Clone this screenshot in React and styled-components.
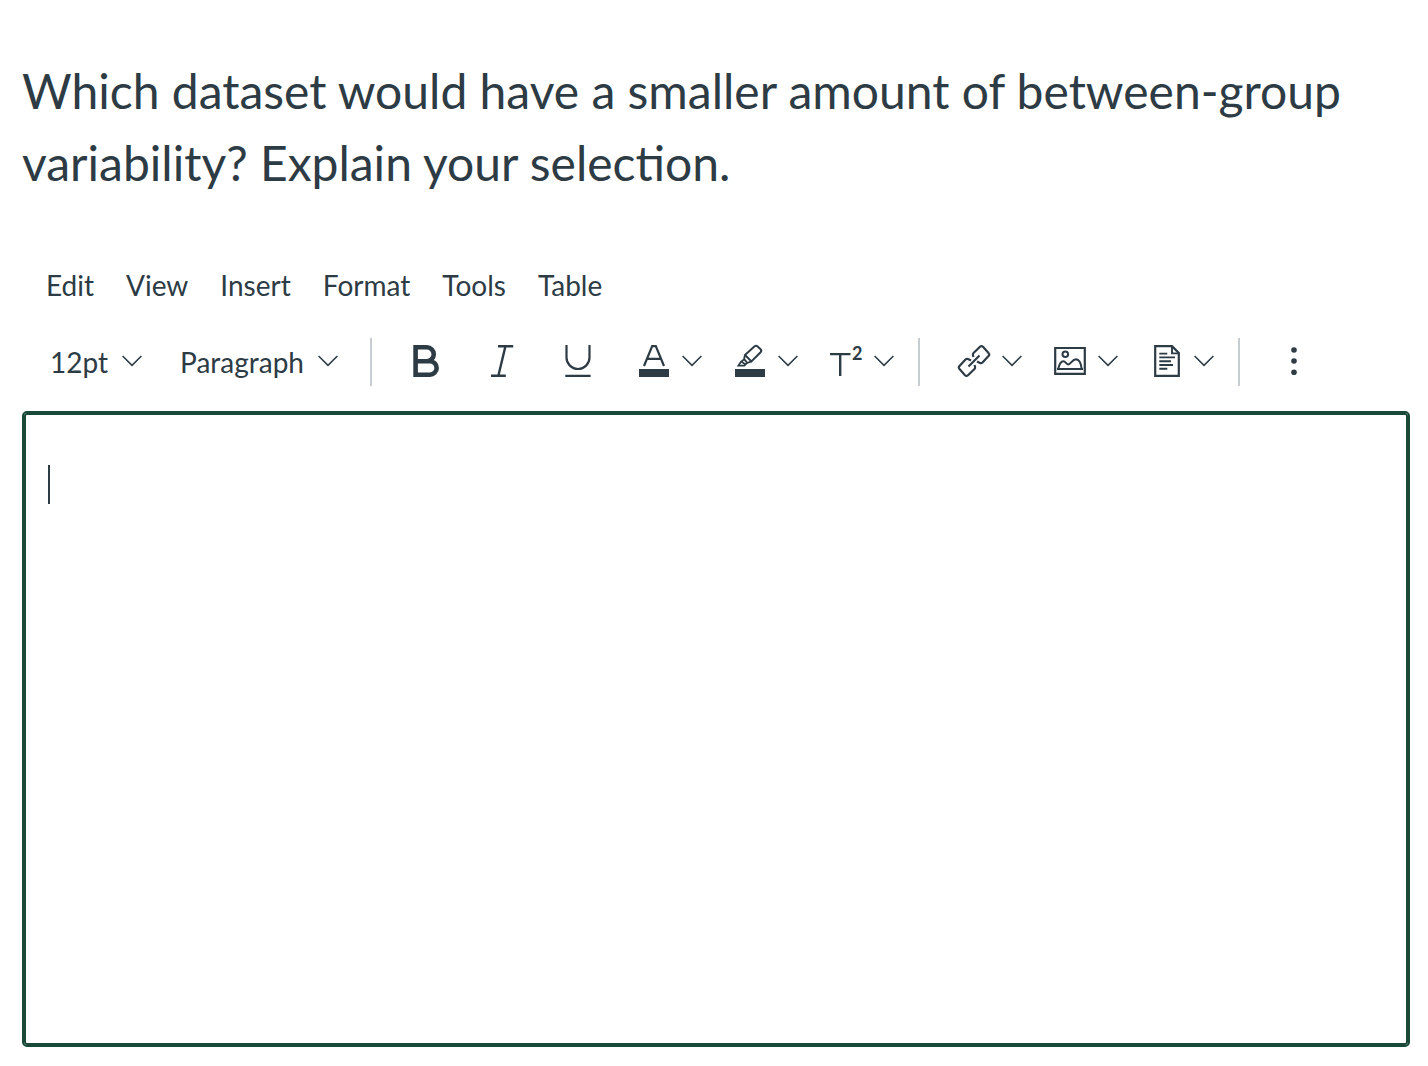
import React, { useState } from "react";
import styled, { createGlobalStyle } from "styled-components";

const GlobalStyle = createGlobalStyle`
    *, *::before, *::after {
        box-sizing: border-box;
    }

    body {
        margin: 0;
        background-color: #ffffff;
        color: #2d3b45;
        font-family: Lato, "Liberation Sans", sans-serif;
    }

    button, select, textarea {
        margin: 0;
        padding: 0;
        border: none;
        background: none;
        color: inherit;
        font: inherit;
    }
`;

const Page = styled.main`
    padding: 55px 18px 18px 22px;
`;

const Question = styled.h1`
    margin: 0;
    font-size: 48px;
    line-height: 72px;
    font-weight: 400;
`;

const MenuBar = styled.nav`
    display: flex;
    flex-wrap: wrap;
    gap: 32px;
    margin-top: 66px;
    padding-left: 24px;
`;

const MenuButton = styled.button`
    font-size: 28px;
    line-height: 40px;
    cursor: pointer;
`;

const Toolbar = styled.div`
    display: flex;
    flex-wrap: wrap;
    align-items: center;
    margin-top: 33px;
    padding-left: 28px;
`;

const Group = styled.div`
    display: flex;
    align-items: center;
    gap: ${({ $gap }) => $gap}px;
`;

const Divider = styled.span`
    width: 2px;
    height: 48px;
    margin: 0 38px 0 ${({ $before }) => $before || 24}px;
    background-color: #c7cdd1;
`;

const ToolButton = styled.button`
    display: flex;
    align-items: center;
    gap: 12px;
    height: 48px;
    padding-bottom: 2px;
    cursor: pointer;
`;

const SelectBox = styled.div`
    display: grid;
    align-items: center;
    height: 48px;

    > * {
        grid-area: 1 / 1;
    }

    svg {
        justify-self: end;
        margin-bottom: 2px;
        pointer-events: none;
    }
`;

const Select = styled.select`
    appearance: none;
    field-sizing: content;
    padding-right: 34px;
    font-size: 28px;
    line-height: 40px;
    cursor: pointer;
`;

const Icon = styled.svg`
    display: block;
    flex: none;
    overflow: visible;
    fill: none;
    stroke: currentColor;
`;

const Editor = styled.div`
    position: relative;
    margin-top: 25px;
    border: 2px solid #1b4937;
    border-radius: 5px;
`;

const TextArea = styled.textarea`
    display: block;
    width: 100%;
    height: 632px;
    padding: 48px 20px 20px;
    border: 2px solid #1b4937;
    border-radius: 3px;
    outline: none;
    resize: none;
    font-size: 32px;
    line-height: 44px;
    caret-color: ${({ $empty }) => ($empty ? "transparent" : "auto")};
`;

const Caret = styled.span`
    position: absolute;
    top: 52px;
    left: 24px;
    width: 2px;
    height: 39px;
    background-color: #2d3b45;
    pointer-events: none;
`;

const Chevron = () => (
    <Icon width="20" height="12" viewBox="0 0 20 12" aria-hidden="true">
        <path d="M0.6 1L10 10.4L19.4 1" strokeWidth="1.5" />
    </Icon>
);

const icons = {
    bold: (
        <path
            d="M5.6 2.3H16.8a6.95 6.95 0 0 1 0 13.9H5.6M16.8 16.2h3.1a6.75 6.75 0 0 1 0 13.5H5.6M5.6 0V32"
            strokeWidth="4.6"
        />
    ),
    italic: <path d="M12 1.2H27.2M5 30.8H19.8M19.5 1L12.3 31" strokeWidth="2.4" />,
    underline: <path d="M4.5 0V12.5a11.5 11.5 0 0 0 23 0V0M3.3 30.8H28.6" />,
    textColor: (
        <>
            <path d="M6 21L14.2 1.2H17.8L26 21M9 13.8H23" />
            <path d="M1 24H31V32H1Z" fill="currentColor" stroke="none" />
        </>
    ),
    highlight: (
        <>
            <path d="M11 10L20.6 1.3Q22.2 0.2 23.6 1.4L26.6 4.2Q28 5.6 26.6 7.2L17.4 16.4Z" strokeWidth="2" />
            <path
                d="M11 10L10 14.4L7.2 16.6L4.4 20.6H10.4L12.8 18.2L17.4 16.4M7.2 16.6L11.6 19.4M10.2 14.2L13.2 17.8"
                strokeWidth="1.8"
            />
            <path d="M1 24H31V32H1Z" fill="currentColor" stroke="none" />
        </>
    ),
    superscript: (
        <>
            <path d="M0 9.1H20.5M10.2 9V31" strokeWidth="2.4" />
            <text x="22" y="15" fontSize="18" fontWeight="700" fill="currentColor" stroke="none">2</text>
        </>
    ),
    link: (
        <>
            <path d="M19 16.5L22 18Q23.5 18.5 24.5 17.5L30.5 11Q32 9.5 30.5 8L25 1.8Q23.5 0.4 22 1.8L15.5 8Q14.5 9 15 10.5L15.5 12" />
            <path d="M13 15.5L10 14Q8.5 13.5 7.5 14.5L1.5 21Q0.2 22.5 1.5 24L7 30.2Q8.5 31.6 10 30.2L16.5 24Q17.5 23 17 21.5L16.5 20" />
            <path d="M10.5 21.5L21.5 10.5" />
        </>
    ),
    image: (
        <>
            <path d="M1.2 3H30.8V28.8H1.2Z" />
            <circle cx="11.3" cy="9.2" r="2.8" strokeWidth="2" />
            <path
                d="M3 24H29M4.4 23.5Q6 16.2 9.2 16.2C11.8 16.2 12 19.4 14 19.4C17 19.4 18 14.2 22 14.2Q26.6 14.6 27.6 23.5"
                strokeWidth="2"
            />
        </>
    ),
    document: (
        <>
            <path d="M5.2 1.2H22L28.8 8V30.8H5.2Z" />
            <path d="M22 1.2V8.4H28.8M9.3 8.6H17.3M9.3 12.4H25M9.3 16.2H21M9.3 20H23M9.3 23.8H17.3" strokeWidth="1.9" />
        </>
    ),
    more: (
        <g fill="currentColor" stroke="none">
            <circle cx="16" cy="5" r="2.8" />
            <circle cx="16" cy="16" r="2.8" />
            <circle cx="16" cy="27.2" r="2.8" />
        </g>
    ),
};

const Tool = ({ icon, label, menu }) => (
    <ToolButton type="button" aria-label={label}>
        <Icon width="32" height="32" viewBox="0 0 32 32" strokeWidth="2.2" aria-hidden="true">
            {icons[icon]}
        </Icon>
        {menu && <Chevron />}
    </ToolButton>
);

const Dropdown = ({ label, options }) => (
    <SelectBox>
        <Select aria-label={label}>
            {options.map((option) => (
                <option key={option}>{option}</option>
            ))}
        </Select>
        <Chevron />
    </SelectBox>
);

const menus = ["Edit", "View", "Insert", "Format", "Tools", "Table"];

const App = () => {
    const [answer, setAnswer] = useState("");

    return (
        <>
            <GlobalStyle />
            <Page>
                <Question>
                    Which dataset would have a smaller amount of between-group variability? Explain your selection.
                </Question>
                <MenuBar>
                    {menus.map((menu) => (
                        <MenuButton key={menu} type="button">{menu}</MenuButton>
                    ))}
                </MenuBar>
                <Toolbar role="toolbar">
                    <Group $gap={38}>
                        <Dropdown label="Font size" options={["12pt"]} />
                        <Dropdown label="Block style" options={["Paragraph"]} />
                    </Group>
                    <Divider $before={32} />
                    <Group $gap={44}>
                        <Tool icon="bold" label="Bold" />
                        <Tool icon="italic" label="Italic" />
                        <Tool icon="underline" label="Underline" />
                        <Group $gap={32}>
                            <Tool icon="textColor" label="Text color" menu />
                            <Tool icon="highlight" label="Background color" menu />
                            <Tool icon="superscript" label="Superscript" menu />
                        </Group>
                    </Group>
                    <Divider />
                    <Group $gap={32}>
                        <Tool icon="link" label="Links" menu />
                        <Tool icon="image" label="Images" menu />
                        <Tool icon="document" label="Documents" menu />
                    </Group>
                    <Divider />
                    <Tool icon="more" label="More" />
                </Toolbar>
                <Editor>
                    <TextArea
                        aria-label="Answer"
                        value={answer}
                        $empty={!answer}
                        onChange={(e) => setAnswer(e.target.value)}
                    />
                    {!answer && <Caret />}
                </Editor>
            </Page>
        </>
    );
};

export default App;
